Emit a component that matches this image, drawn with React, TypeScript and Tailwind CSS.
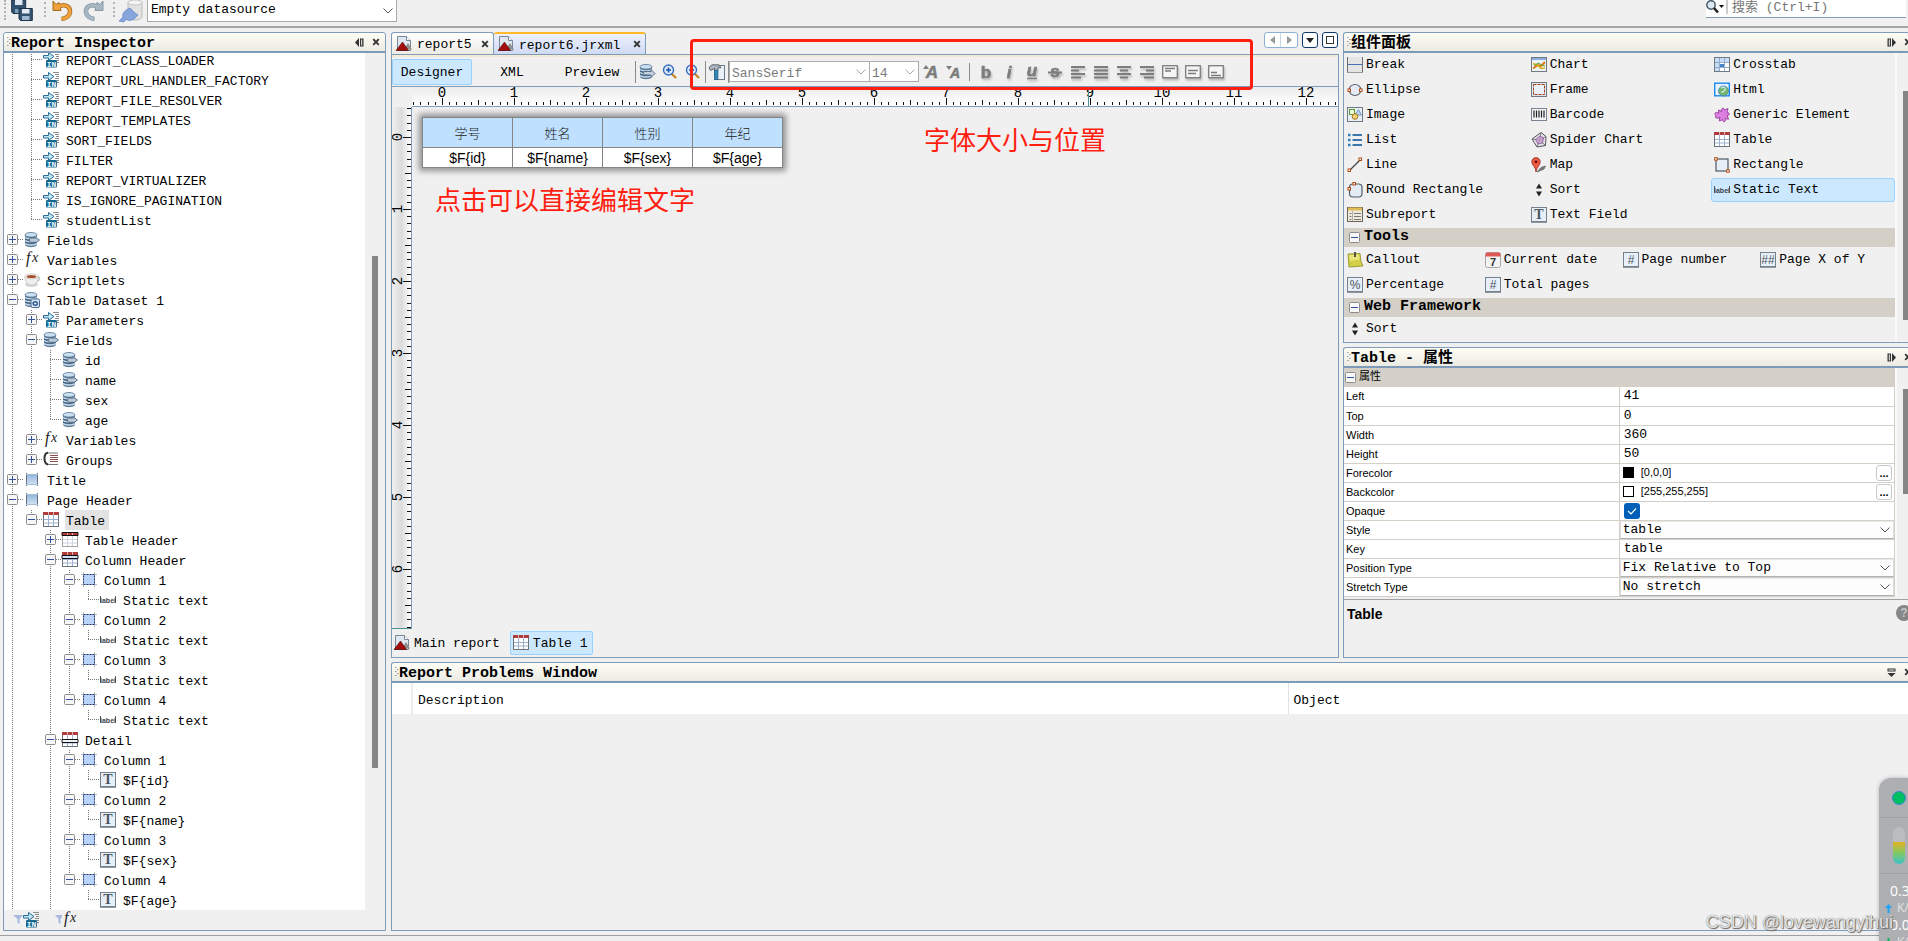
import React from "react";

/* ---------- icons ---------- */

type IconProps = { size?: number; box?: number; children: React.ReactNode };

function Svg({ children, size = 16, box = 16 }: IconProps) {
  return (
    <svg width={size} height={size} viewBox={`0 0 ${box} ${box}`} className="shrink-0 overflow-visible" aria-hidden="true">
      {children}
    </svg>
  );
}

const Param = () => (
  <Svg>
    <path d="M10 .5h6M12 2.5h4M13 4.5h3M12 6.5h4M14 8.5h2M14 10.5h2" stroke="#8b8b8b" />
    <path d="M.5 3.5h5v-3l5.500 4-5.500 4v-2.500h-5z" fill="#bfe6f7" stroke="#2a6c96" />
    <rect x="3" y="8" width="11" height="7.500" rx="1" fill="#17678e" />
    <text x="8.500" y="14.500" fontSize="8" fontWeight="bold" textAnchor="middle" fontFamily="Liberation Mono, monospace" fill="#e6f6fd">
      IN
    </text>
  </Svg>
);

const Disks = () => (
  <>
    <path d="M1 3v9.500c0 3.500 12 3.500 12 0V3z" fill="#5f7d9b" />
    <path d="M1 5.500c2 2 10 2 12 0M1 8.500c2 2 10 2 12 0M1 11.500c2 2 10 2 12 0" fill="none" stroke="#c5d9ea" strokeWidth="1.300" />
    <path d="M1 6.700c2 2 10 2 12 0M1 9.700c2 2 10 2 12 0" fill="none" stroke="#38536f" strokeWidth=".8" />
    <ellipse cx="7" cy="2.800" rx="6" ry="2.300" fill="#c9dff2" stroke="#57748f" strokeWidth=".8" />
  </>
);

const Field = () => (
  <Svg>
    <Disks />
    <path d="M7 6h5.500l3 2-3 2.300H7c-2 0-2-4.300 0-4.300z" fill="#b9c9d8" stroke="#4f6780" strokeWidth=".9" />
  </Svg>
);

const Dataset = () => (
  <Svg>
    <Disks />
    <rect x="7" y="7" width="8.500" height="8.500" rx="1.500" fill="#dbe7f3" stroke="#456b93" />
    <path d="M9 12c0-3 4-3 4.500-.5M13.500 11c0 3-4 3-4.500.5" fill="none" stroke="#2d5c92" strokeWidth="1.400" />
  </Svg>
);

const Fx = () => (
  <Svg>
    <text x="2" y="11" fontSize="16" fontStyle="italic" fontFamily="Liberation Serif, serif" fill="#222">
      f
    </text>
    <text x="8" y="10" fontSize="14" fontStyle="italic" fontFamily="Liberation Serif, serif" fill="#222">
      x
    </text>
  </Svg>
);

const Cup = () => (
  <Svg>
    <ellipse cx="7.500" cy="12.500" rx="6.500" ry="2.500" fill="#d4d4d4" />
    <path d="M12 5h2.500c1.500 0 1.500 4-2 4.500" fill="none" stroke="#c2c2c2" strokeWidth="1.300" />
    <path d="M1 4.500c0 6 3 8.500 6.500 8.500s6.500-2.500 6.500-8.500z" fill="#f1efed" stroke="#c5c0bc" strokeWidth=".8" />
    <ellipse cx="7.500" cy="4.300" rx="6.500" ry="2.500" fill="#faf8f6" stroke="#c5c0bc" strokeWidth=".8" />
    <ellipse cx="7.500" cy="4.500" rx="4.800" ry="1.600" fill="#a4512f" />
  </Svg>
);

const Groups = () => (
  <Svg>
    <path d="M5 .8C2.500 1 1.500 3 1.500 6.500S2.500 12 5 12.500" fill="none" stroke="#333" strokeWidth="2" />
    <path d="M5 1h10M5 12.500h10" stroke="#777" />
    <path d="M7 3.500h8M7 5.500h8M7 7.500h8M7 9.500h8" stroke="#8d5050" />
  </Svg>
);

const Band = () => (
  <Svg>
    <defs>
      <linearGradient id="band" x1="0" y1="0" x2="0" y2="1">
        <stop offset="0" stopColor="#8fb4dc" />
        <stop offset="1" stopColor="#d6e4f4" />
      </linearGradient>
    </defs>
    <path d="M2.500 1v13M13.500 1v13" stroke="#66717c" />
    <rect x="3" y="2" width="10" height="11" fill="url(#band)" />
    <path d="M2 2.500h12M2 12.500h12" stroke="#a5bdd6" />
  </Svg>
);

function Grid({ mark, faded }: { mark?: "top" | "column" | "detail"; faded?: boolean }) {
  return (
    <Svg>
      <rect x=".5" y=".5" width="15" height="14" fill="#fff" stroke={faded ? "#a9a2a2" : "#6d737b"} />
      <path d="M5.500 3v11M10.500 3v11M1 7.500h14M1 11h14" stroke={faded ? "#cdd5e2" : "#9db1cf"} />
      <path d="M0 1.500h16" stroke="#b13c3c" strokeWidth="3" />
      <path d="M5.500 0v3M10.500 0v3" stroke="#ddb0b0" />
      {mark === "top" && <path d="M0 .5h16v3H0z" fill="none" stroke="#111" />}
      {mark === "column" && <path d="M0 3.500h16v3H0z" fill="#cfe2fa" stroke="#111" />}
      {mark === "detail" && <path d="M0 7.500h16v3H0z" fill="#eef3fa" stroke="#111" />}
    </Svg>
  );
}

const Column = () => (
  <Svg>
    <path d="M2.500 0v15M13.500 0v15M0 2.500h16M0 12.500h16" stroke="#b9b9b9" />
    <rect x="2.500" y="2.500" width="11" height="10" fill="#b9d3fb" stroke="#223a78" strokeDasharray="2 1" />
  </Svg>
);

const Label = () => (
  <Svg>
    <path d="M.5 4v7M15.500 4v7" stroke="#555" />
    <text x="8" y="10.500" fontSize="7" fontWeight="bold" textAnchor="middle" fontFamily="Liberation Sans, sans-serif" fill="#3c444d">
      label
    </text>
  </Svg>
);

function Glyph({ text, serif, fontSize = 12 }: { text: string; serif?: boolean; fontSize?: number }) {
  return (
    <Svg>
      <rect x=".5" y=".5" width="15" height="14" fill="#e7eff8" stroke="#76818d" />
      <path d="M0 15.500h16" stroke="#8f979f" />
      <text
        x="8"
        y="12"
        fontSize={serif ? 14 : fontSize}
        textAnchor="middle"
        fontWeight={serif ? "bold" : "normal"}
        fontFamily={serif ? "Liberation Serif, serif" : "Liberation Sans, sans-serif"}
        fill="#4c5560"
      >
        {text}
      </text>
    </Svg>
  );
}

const ReportFile = () => (
  <Svg>
    <path d="M1.500.5h9l4 4v10h-13z" fill="#dfe8f1" stroke="#7a8794" />
    <path d="M10.500.5v4h4" fill="#fff" stroke="#7a8794" />
    <path d="M8 13.500L12 7l4 6.500z" fill="#8f8f8f" />
    <path d="M0 14.500L6.500 6l6 8.500z" fill="#a30d0d" stroke="#4c0000" strokeWidth=".6" />
  </Svg>
);

const paletteIcons: Record<string, React.ReactNode> = {
  Break: (
    <Svg>
      <rect x="1" y="0" width="14" height="15" fill="#e4e4e4" />
      <path d="M.5 0v15.500M15.500 0v15.500" stroke="#707070" />
      <path d="M1 7.500h14" stroke="#4771b5" />
      <path d="M0 15.500h16" stroke="#999" />
    </Svg>
  ),
  Ellipse: (
    <Svg>
      <ellipse cx="8" cy="8" rx="6" ry="5.500" fill="#e3eaf3" stroke="#5c6672" strokeWidth="1.200" />
      <rect x="1" y="7" width="2.500" height="2.500" fill="#fff" stroke="#b54a0e" />
      <rect x="12.500" y="7" width="2.500" height="2.500" fill="#fff" stroke="#b54a0e" />
    </Svg>
  ),
  Image: (
    <Svg>
      <rect x=".5" y=".5" width="15" height="14" fill="#e7eef6" stroke="#6f7883" />
      <rect x="2.500" y="2.500" width="5" height="5" fill="#eef8e2" stroke="#5b9a28" />
      <path d="M8 8l3.500-5.500L14.500 8z" fill="#b9d1ee" stroke="#7d9cc4" />
      <circle cx="8" cy="9.500" r="2.800" fill="#f3cf75" stroke="#a8791b" />
    </Svg>
  ),
  List: (
    <Svg>
      <path d="M1 3h2.500M1 8h2.500M1 13h2.500" stroke="#2f7fc0" strokeWidth="2.400" />
      <path d="M5.500 3H15M5.500 8H15M5.500 13H15" stroke="#3c77ad" strokeWidth="2" />
    </Svg>
  ),
  Line: (
    <Svg>
      <path d="M3 13l10-10" stroke="#444" strokeWidth="1.200" />
      <rect x="1" y="12" width="2.500" height="2.500" fill="#fff" stroke="#b54a0e" />
      <rect x="12" y="1" width="2.500" height="2.500" fill="#fff" stroke="#b54a0e" />
    </Svg>
  ),
  "Round Rectangle": (
    <Svg>
      <rect x="2.500" y="2" width="12.500" height="13" rx="3.500" fill="#e4ebf3" stroke="#4f5a68" strokeWidth="1.200" />
      <rect x="6" y=".5" width="2.500" height="2.500" fill="#fff" stroke="#b54a0e" />
      <rect x="1" y="5.500" width="2.500" height="2.500" fill="#fff" stroke="#b54a0e" />
    </Svg>
  ),
  Subreport: (
    <Svg>
      <rect x=".5" y=".5" width="15" height="14" fill="#eee9dc" stroke="#6b6657" />
      <path d="M1 2h14" stroke="#e3bb55" strokeWidth="3" />
      <path d="M5.500 4v10" stroke="#b5b0a2" />
      <path d="M2.500 6.500h2M7 6.500h7M2.500 9.500h2M7 9.500h7M2.500 12.500h2M7 12.500h7" stroke="#7a7a7a" />
    </Svg>
  ),
  Chart: (
    <Svg>
      <rect x=".5" y=".5" width="15" height="14" fill="#eef3f9" stroke="#6f7883" />
      <path d="M1 2h14" stroke="#8cb0dd" strokeWidth="2" />
      <path d="M2 11.500l5-3.500 3 1 4-4" stroke="#e07a1a" strokeWidth="2" fill="none" />
      <path d="M2 6.500l5 2 3 3 4-.5" stroke="#d4b011" strokeWidth="1.500" fill="none" />
      <path d="M3 9l4-3 4 2 3 1" stroke="#55a03c" fill="none" />
    </Svg>
  ),
  Frame: (
    <Svg>
      <rect x=".5" y=".5" width="15" height="14" fill="#dde6ef" stroke="#6f7883" />
      <rect x="2.500" y="2.500" width="11" height="10" fill="#eaf0f7" stroke="#a8401a" strokeDasharray="3 1" />
    </Svg>
  ),
  Barcode: (
    <Svg>
      <rect x=".5" y="1.500" width="15" height="12" fill="#f2f4f6" stroke="#7b848e" />
      <path d="M3 3.500v7M5.500 3.500v7M8 3.500v7M10.500 3.500v7M13 3.500v7" stroke="#222" strokeWidth="1.200" />
    </Svg>
  ),
  "Spider Chart": (
    <Svg>
      <path d="M1 7l9-6.500 5 4-.5 9L6 15z" fill="#e6e1ea" stroke="#555" />
      <path d="M8.500 8L1 7M8.500 8L10 .5M8.500 8l6.500-3.500M8.500 8l6 5.500M8.500 8L6 15" stroke="#666" strokeWidth=".8" />
      <path d="M4.500 7.500L9 4l3.500 2-1 5-4.500 1z" fill="#c89ad3" fillOpacity=".7" stroke="#7c4a8c" strokeWidth=".7" />
    </Svg>
  ),
  Map: (
    <Svg>
      <path d="M6 15l4-4.500 4.500-1.500L13 12z" fill="#777" stroke="#777" />
      <path d="M5 15C5 10 .8 8.500.8 4.800a4.200 4.200 0 018.400 0C9.200 8.500 5.500 10 5 15z" fill="#ee5a45" stroke="#93271a" strokeWidth=".8" />
      <circle cx="5" cy="4.800" r="1.400" fill="#5b0f08" />
    </Svg>
  ),
  Sort: (
    <Svg>
      <path d="M8 1.500L11 6.500H5zM8 14.500l-3-5h6z" fill="#222" />
    </Svg>
  ),
  "Text Field": <Glyph text="T" serif />,
  Crosstab: (
    <Svg>
      <rect x=".5" y=".5" width="15" height="14" fill="#fff" stroke="#6f7883" />
      <path d="M1 1h14v4H1zM1 5h4v9H1z" fill="#c7dcf5" />
      <rect x="6" y="7" width="5" height="4" fill="#4c83c8" />
      <path d="M5.500 1v13M10.500 1v13M1 5.500h14M1 10.500h14" stroke="#93aacb" />
    </Svg>
  ),
  Html: (
    <Svg>
      <rect x=".7" y="1.200" width="14.600" height="12.600" fill="#e6f2fd" stroke="#1d8af0" strokeWidth="1.400" />
      <circle cx="9.500" cy="9" r="5" fill="#74b56a" stroke="#4685b0" strokeWidth=".8" />
      <path d="M7 6c3-2 5 0 4 2s-3 1-3 3" fill="none" stroke="#cfe9f5" strokeWidth="1.300" />
    </Svg>
  ),
  "Generic Element": (
    <Svg>
      <path
        d="M8 4.500C6 1.500 10-.5 10.500 3L14 1.500l-1 4.300c3-.8 3 3 .2 2.500l1.300 4-3.300-.8c1.800 3.500-2.500 4.500-2.700 1.200L5.300 14l.5-3.600C3 12.500-.5 10 2.300 8.800-.8 7 1.500 4 4.700 6.200L4.500 3z"
        fill="#dd7fe0"
        stroke="#8d2c92"
        strokeWidth=".8"
      />
    </Svg>
  ),
  Table: <Grid />,
  Rectangle: (
    <Svg>
      <rect x="2" y="2" width="12" height="12" fill="#e7eef6" stroke="#4f5a68" strokeWidth="1.200" />
      <rect x=".7" y=".7" width="2.500" height="2.500" fill="#fff" stroke="#b54a0e" />
      <rect x="12.700" y="12.700" width="2.500" height="2.500" fill="#fff" stroke="#b54a0e" />
    </Svg>
  ),
  "Static Text": <Label />,
  Callout: (
    <Svg>
      <path d="M1 2l12-.5 1 8 2 4.500-14 1z" fill="#d3cf49" stroke="#8e8b1f" strokeWidth=".8" />
      <path d="M2 3l10-.5.500 5L3 9z" fill="#e8e57c" />
      <path d="M8 0v5" stroke="#444" strokeWidth="1.800" />
    </Svg>
  ),
  "Current date": (
    <Svg>
      <rect x=".5" y=".5" width="15" height="15" rx="2" fill="#f3f3f3" stroke="#a8a8a8" />
      <path d="M.5 4.500V2.500a2 2 0 012-2h11a2 2 0 012 2v2z" fill="#e05a55" />
      <text x="8" y="14" fontSize="11" fontWeight="bold" textAnchor="middle" fontFamily="Liberation Sans, sans-serif" fill="#333">
        7
      </text>
    </Svg>
  ),
  "Page number": <Glyph text="#" />,
  "Page X of Y": <Glyph text="##" />,
  Percentage: <Glyph text="%" />,
  "Total pages": <Glyph text="#" />,
};

const Chevron = ({ muted }: { muted?: boolean }) => (
  <svg width="10" height="6" viewBox="0 0 10 6" aria-hidden="true" className="pointer-events-none absolute top-1/2 right-1 -translate-y-1/2">
    <path d="M.5.5L5 5 9.500.5" fill="none" stroke={muted ? "#a8a8a8" : "#555"} />
  </svg>
);

const Cross = () => (
  <svg width="8" height="8" viewBox="0 0 8 8" aria-hidden="true" className="shrink-0">
    <path d="M1.200 1.200l5.600 5.600M6.800 1.200L1.200 6.800" stroke="#333" strokeWidth="1.900" />
  </svg>
);

const Grip = () => (
  <svg width="4" height="12" viewBox="0 0 4 12" aria-hidden="true" className="shrink-0">
    <path d="M0 1.500h1.500M2 3.500h1.500M0 5.500h1.500M2 7.500h1.500M0 9.500h1.500" stroke="#999" />
  </svg>
);

const ToolbarGrip = () => <span className="h-5 w-0 border-l-2 border-dotted border-[#b3b3b3]" />;

/* ---------- shared parts ---------- */

function PanelHeader({ title, mode }: { title: string; mode: "left" | "right" | "down" }) {
  return (
    <header className="flex h-5 shrink-0 items-center rounded-t-[3px] border-b-2 border-b-[#7d9ab8] bg-linear-to-b from-[#fefdf6] to-[#ebeae3] pl-[3px]">
      <Grip />
      <h2 className="h-[18px] text-[15px] leading-[22px] font-bold">{title}</h2>
      <div className={mode === "left" ? "ml-auto flex items-center gap-2 pr-[5px]" : "-mr-1 ml-auto flex items-center gap-2"}>
        <button type="button" aria-label="Minimize panel">
          <svg width="9" height="9" viewBox="0 0 9 9" aria-hidden="true">
            {mode === "left" && <path d="M4 0v9L0 4.500zM5 .5h3.500v8H5z" fill="#333" />}
            {mode === "left" && <path d="M6.700 1.500v6" stroke="#f5f4ed" />}
            {mode === "right" && <path d="M5 0v9l4-4.500zM.5.5H4v8H.5z" fill="#333" />}
            {mode === "right" && <path d="M2.300 1.500v6" stroke="#f5f4ed" />}
            {mode === "down" && <path d="M.5.5h8v3h-8zM.5 5h8L4.500 9z" fill="#333" />}
            {mode === "down" && <path d="M1.500 2h6" stroke="#f5f4ed" />}
          </svg>
        </button>
        <button type="button" aria-label="Close panel">
          <Cross />
        </button>
      </div>
    </header>
  );
}

/* ---------- report inspector ---------- */

type TreeNode = {
  label: string;
  icon: React.ReactNode;
  state?: "open" | "closed";
  selected?: boolean;
  continues?: boolean;
  children?: TreeNode[];
};
type TreeRow = { node: TreeNode; guides: boolean[]; last: boolean };

const param = (label: string): TreeNode => ({ label, icon: <Param /> });
const field = (label: string): TreeNode => ({ label, icon: <Field /> });
const column = (label: string, child: string, icon: React.ReactNode): TreeNode => ({
  label,
  icon: <Column />,
  state: "open",
  children: [{ label: child, icon }],
});

const parameters: TreeNode[] = [
  "REPORT_CLASS_LOADER",
  "REPORT_URL_HANDLER_FACTORY",
  "REPORT_FILE_RESOLVER",
  "REPORT_TEMPLATES",
  "SORT_FIELDS",
  "FILTER",
  "REPORT_VIRTUALIZER",
  "IS_IGNORE_PAGINATION",
  "studentList",
].map(param);

const roots: TreeNode[] = [
  { label: "Fields", icon: <Field />, state: "closed" },
  { label: "Variables", icon: <Fx />, state: "closed" },
  { label: "Scriptlets", icon: <Cup />, state: "closed" },
  {
    label: "Table Dataset 1",
    icon: <Dataset />,
    state: "open",
    children: [
      { label: "Parameters", icon: <Param />, state: "closed" },
      { label: "Fields", icon: <Field />, state: "open", children: ["id", "name", "sex", "age"].map(field) },
      { label: "Variables", icon: <Fx />, state: "closed" },
      { label: "Groups", icon: <Groups />, state: "closed" },
    ],
  },
  { label: "Title", icon: <Band />, state: "closed" },
  {
    label: "Page Header",
    icon: <Band />,
    state: "open",
    continues: true,
    children: [
      {
        label: "Table",
        icon: <Grid />,
        state: "open",
        selected: true,
        children: [
          { label: "Table Header", icon: <Grid mark="top" faded />, state: "closed" },
          {
            label: "Column Header",
            icon: <Grid mark="column" />,
            state: "open",
            children: [1, 2, 3, 4].map((n) => column(`Column ${n}`, "Static text", <Label />)),
          },
          {
            label: "Detail",
            icon: <Grid mark="detail" />,
            state: "open",
            continues: true,
            children: ["id", "name", "sex", "age"].map((f, i) => column(`Column ${i + 1}`, `$F{${f}}`, <Glyph text="T" serif />)),
          },
        ],
      },
    ],
  },
];

function flatten(nodes: TreeNode[], guides: boolean[]): TreeRow[] {
  return nodes.flatMap((node, i) => {
    const last = i === nodes.length - 1 && !node.continues;
    return [{ node, guides, last }, ...flatten(node.children ?? [], [...guides, !last])];
  });
}

const treeRows: TreeRow[] = [...flatten(parameters, [true]), ...flatten(roots, [])];

function Guide({ vertical }: { vertical: boolean }) {
  return (
    <svg width="19" height="20" viewBox="0 0 19 20" aria-hidden="true" className="shrink-0">
      {vertical && <path d="M8.500 0v20" stroke="#777" strokeDasharray="1 1" />}
    </svg>
  );
}

function Connector({ state, last }: { state?: "open" | "closed"; last: boolean }) {
  return (
    <svg width="19" height="20" viewBox="0 0 19 20" aria-hidden="true" className="shrink-0">
      <path d={last ? "M8.500 0v10" : "M8.500 0v20"} stroke="#777" strokeDasharray="1 1" />
      <path d="M8 9.500h11" stroke="#777" strokeDasharray="1 1" />
      {state && <rect x="3.500" y="4.500" width="10" height="10" rx="1" fill="#f6f6f6" stroke="#8c8c8c" />}
      {state && <path d={state === "open" ? "M5 9.500h7" : "M5 9.500h7M8.500 6v7"} stroke="#35509c" />}
    </svg>
  );
}

function Inspector() {
  return (
    <aside className="flex w-[383px] shrink-0 flex-col rounded-t-[3px] border border-[#7f9db9] bg-[#f0f0f0]">
      <PanelHeader title="Report Inspector" mode="left" />
      <div className="flex min-h-0 flex-1">
        <ul role="tree" className="flex min-h-0 flex-1 flex-col justify-end overflow-hidden bg-white">
          {treeRows.map(({ node, guides, last }, i) => (
            <li key={i} role="treeitem" aria-selected={!!node.selected} className="flex h-5 shrink-0 items-center">
              {guides.map((g, d) => (
                <Guide key={d} vertical={g} />
              ))}
              <Connector state={node.state} last={last} />
              <span className="flex w-6 shrink-0 pl-px">{node.icon}</span>
              <span className={node.selected ? "-ml-px h-5 bg-[#e3e3e3] pr-1 pl-px leading-6" : "h-5 leading-6"}>{node.label}</span>
            </li>
          ))}
        </ul>
        <div className="flex w-5 flex-col items-center bg-[#f0f0f0] pt-[203px]">
          <div className="h-[512px] w-[6px] bg-[#858585]" />
        </div>
      </div>
      <footer className="flex h-5 shrink-0 items-center gap-4 pl-[9px]">
        <button type="button" aria-label="Filter parameters" className="flex items-center">
          <svg width="10" height="12" viewBox="0 0 10 12" aria-hidden="true">
            <path d="M0 1h10L6.500 5v5l-2-1V5z" fill="#a9b8e0" />
          </svg>
          <Param />
        </button>
        <button type="button" aria-label="Filter variables" className="flex items-center">
          <svg width="7" height="12" viewBox="0 0 7 12" aria-hidden="true">
            <path d="M0 1h7v2L5.500 5v5l-2-1V5z" fill="#a9b8e0" />
          </svg>
          <Fx />
        </button>
      </footer>
    </aside>
  );
}

/* ---------- editor ---------- */

const range = (n: number) => Array.from({ length: n }, (_, i) => i);
const ticks = range(404).map((i) => i - 4);
const tickSize = (k: number) => (k % 10 === 0 ? 8 : k % 5 === 0 ? 6 : 4);

function HorizontalRuler() {
  return (
    <div className="ml-5 h-5 shrink-0 overflow-hidden border-b border-[#7f9db9] bg-linear-to-b from-[#ececec] to-white">
      <svg width="2900" height="19" aria-hidden="true">
        {ticks.map((k) => (
          <path key={k} d={`M${Math.round(30 + k * 7.2) + 0.5} ${19 - tickSize(k)}V18`} stroke="#111" />
        ))}
        {range(13).map((n) => (
          <text key={n} x={30 + n * 72} y="10" fontSize="14" textAnchor="middle" fontFamily="Liberation Mono, monospace">
            {n}
          </text>
        ))}
        <path d="M676.500 0v19" stroke="#4f8f94" />
      </svg>
    </div>
  );
}

function VerticalRuler() {
  return (
    <div className="w-5 shrink-0 overflow-hidden border-r border-b border-r-[#7f9db9] border-b-[#4f8f94] bg-linear-to-r from-[#f0f0f0] via-[#dcdcdc] to-white">
      <svg width="19" height="2900" aria-hidden="true">
        {ticks.map((k) => (
          <path key={k} d={`M${19 - tickSize(k)} ${Math.round(30 + k * 7.2) + 0.5}H19`} stroke="#111" />
        ))}
        {range(7).map((n) => (
          <text
            key={n}
            transform={`translate(10 ${30 + n * 72}) rotate(-90)`}
            fontSize="14"
            textAnchor="middle"
            fontFamily="Liberation Mono, monospace"
          >
            {n}
          </text>
        ))}
      </svg>
    </div>
  );
}

function Magnifier({ minus }: { minus?: boolean }) {
  return (
    <Svg>
      <path d="M9.500 9.500l4.500 4.500" stroke="#c9892b" strokeWidth="2.400" />
      <circle cx="6.500" cy="6" r="5" fill="#dcebfa" stroke="#3a6fc0" strokeWidth="1.400" />
      <path d={minus ? "M4 6h5" : "M4 6h5M6.500 3.500v5"} stroke="#1f55ad" strokeWidth="1.600" />
    </Svg>
  );
}

const Sep = () => <span className="h-[22px] w-px shrink-0 bg-[#8a8a8a]" />;

const letterStyle = { fontWeight: "bold", textAnchor: "middle", fontFamily: "Liberation Sans, sans-serif", stroke: "#7d7d7d", strokeWidth: 0.6 } as const;

const formatButtons: { name: string; icon: React.ReactNode }[] = [
  {
    name: "Bold",
    icon: (
      <text x="8" y="14" fontSize="17" {...letterStyle}>
        b
      </text>
    ),
  },
  {
    name: "Italic",
    icon: (
      <text x="8" y="14" fontSize="17" fontStyle="italic" {...letterStyle}>
        i
      </text>
    ),
  },
  {
    name: "Underline",
    icon: (
      <>
        <text x="8" y="12" fontSize="17" fontStyle="italic" {...letterStyle}>
          u
        </text>
        <path d="M3 14.500h10" stroke="#7d7d7d" strokeWidth="1.500" />
      </>
    ),
  },
  {
    name: "Strikethrough",
    icon: (
      <>
        <text x="8" y="13" fontSize="17" {...letterStyle}>
          s
        </text>
        <path d="M1 8.500h14" stroke="#7d7d7d" strokeWidth="2" />
      </>
    ),
  },
  { name: "Align left", icon: <path d="M1 3h14M1 6.500h8M1 10h14M1 13.500h10" stroke="#7d7d7d" strokeWidth="1.800" /> },
  { name: "Justify", icon: <path d="M1 3h14M1 6.500h14M1 10h14M1 13.500h14" stroke="#7d7d7d" strokeWidth="1.800" /> },
  { name: "Center", icon: <path d="M1 3h14M4 6.500h8M1 10h14M4 13.500h8" stroke="#7d7d7d" strokeWidth="1.800" /> },
  { name: "Align right", icon: <path d="M1 3h14M7 6.500h8M1 10h14M5 13.500h10" stroke="#7d7d7d" strokeWidth="1.800" /> },
  {
    name: "Align top",
    icon: (
      <>
        <rect x=".7" y="1.700" width="14.600" height="12" fill="#f5f5f5" stroke="#7d7d7d" strokeWidth="1.300" />
        <path d="M3 4.500h10M3 7h6" stroke="#7d7d7d" strokeWidth="1.600" />
      </>
    ),
  },
  {
    name: "Align middle",
    icon: (
      <>
        <rect x=".7" y="1.700" width="14.600" height="12" fill="#f5f5f5" stroke="#7d7d7d" strokeWidth="1.300" />
        <path d="M3 6.500h10M3 9.500h8" stroke="#7d7d7d" strokeWidth="1.600" />
      </>
    ),
  },
  {
    name: "Align bottom",
    icon: (
      <>
        <rect x=".7" y="1.700" width="14.600" height="12" fill="#f5f5f5" stroke="#7d7d7d" strokeWidth="1.300" />
        <path d="M3 8.500h6M3 11.500h10" stroke="#7d7d7d" strokeWidth="1.600" />
      </>
    ),
  },
];

function EditorToolbar() {
  return (
    <div className="flex h-8 shrink-0 items-center border-t-2 border-b border-t-[#f3ead6] border-b-[#7f9db9]">
      <button type="button" className="h-[26px] w-20 shrink-0 rounded-[2px] border border-[#99d1ff] bg-[#cce8ff] pt-[2px]">
        Designer
      </button>
      <button type="button" className="h-[26px] w-20 shrink-0 pt-[2px]">
        XML
      </button>
      <button type="button" className="mr-[3px] h-[26px] w-20 shrink-0 pt-[2px]">
        Preview
      </button>
      <Sep />
      <button type="button" aria-label="Report query" className="mx-[3px]">
        <Svg>
          <Disks />
          <path d="M6 7.500h6V5.500l4 4-4 4v-2.500H6c-2 0-2-3.500 0-3.500z" fill="#c3d1de" stroke="#4f6780" strokeWidth=".9" />
        </Svg>
      </button>
      <button type="button" aria-label="Zoom in" className="mx-1">
        <Magnifier />
      </button>
      <button type="button" aria-label="Zoom out" className="mr-1 ml-[3px]">
        <Magnifier minus />
      </button>
      <Sep />
      <button type="button" aria-label="Formatting tools" className="mx-[3px]">
        <Svg>
          <rect x="5.500" y="1.500" width="10" height="14" fill="#e9f0f7" stroke="#6c7a88" />
          <path d="M0 3.500L3 .8h7l2 3H9v2.500H5.500V4.500L1.500 6.500z" fill="#aeb7bf" stroke="#454e57" strokeWidth=".8" />
          <rect x="5.500" y="6.500" width="3.500" height="9" fill="#2f87b5" stroke="#1f5f83" strokeWidth=".6" />
        </Svg>
      </button>
      <Sep />
      <div className="relative">
        <select aria-label="Font" className="block h-[21px] w-[141px] appearance-none border border-[#adadad] bg-white px-[2px] pt-[2px] text-[#7a7a7a]">
          <option>SansSerif</option>
        </select>
        <Chevron muted />
      </div>
      <div className="relative -ml-px">
        <select aria-label="Font size" className="block h-[21px] w-[50px] appearance-none border border-[#adadad] bg-white px-[2px] pt-[2px] text-[#7a7a7a]">
          <option>14</option>
        </select>
        <Chevron muted />
      </div>
      <div className="flex items-center gap-[7px] px-1">
        <button type="button" aria-label="Increase font size">
          <Svg>
            <path d="M0 5l3-4 3 4z" fill="#7d7d7d" />
            <text x="9" y="14" fontSize="17" fontStyle="italic" fill="#7d7d7d" {...letterStyle}>
              A
            </text>
          </Svg>
        </button>
        <button type="button" aria-label="Decrease font size">
          <Svg>
            <path d="M0 2h6L3 6z" fill="#7d7d7d" />
            <text x="9" y="14" fontSize="14" fontStyle="italic" fill="#7d7d7d" {...letterStyle}>
              A
            </text>
          </Svg>
        </button>
      </div>
      <span className="ml-[3px] h-[18px] w-px bg-[#8a8a8a]" />
      <div className="flex items-center gap-[7px] pl-2 drop-shadow-[1px_2px_1px_rgba(0,0,0,0.25)]">
        {formatButtons.map((b) => (
          <button key={b.name} type="button" aria-label={b.name}>
            <svg width="16" height="16" viewBox="0 0 16 16" fill="#7d7d7d" aria-hidden="true" className="overflow-visible">
              {b.icon}
            </svg>
          </button>
        ))}
      </div>
    </div>
  );
}

const reportColumns = [
  ["学号", "$F{id}"],
  ["姓名", "$F{name}"],
  ["性别", "$F{sex}"],
  ["年纪", "$F{age}"],
];

function Editor() {
  return (
    <section className="relative flex min-w-0 flex-1 flex-col">
      <div className="flex h-[23px] shrink-0 border-b border-[#7f9db9] pr-px">
        <div className="flex w-[103px] items-center gap-[5px] rounded-t-[3px] border border-b-0 border-[#7f9db9] bg-linear-to-b from-white to-[#ecebe4] pl-1">
          <ReportFile />
          <span className="pt-[3px]">report5</span>
          <button type="button" aria-label="Close report5" className="ml-auto pr-1">
            <Cross />
          </button>
        </div>
        <div className="flex w-[152px] items-center gap-[5px] rounded-t-[3px] border-t-2 border-r border-t-[#ffb92b] border-r-[#7f9db9] bg-linear-to-b from-[#eef1fd] to-[#cfdaf4] pl-1">
          <ReportFile />
          <span className="pt-[3px]">report6.jrxml</span>
          <button type="button" aria-label="Close report6.jrxml" className="ml-auto pr-1">
            <Cross />
          </button>
        </div>
        <div className="ml-auto flex h-4 gap-1">
          <div className="flex rounded-[3px] border border-[#8fb0d0] bg-white">
            <button type="button" aria-label="Scroll tabs left" className="flex w-4 items-center justify-center border-r border-[#c8d6e4]">
              <svg width="5" height="8" viewBox="0 0 5 8" aria-hidden="true">
                <path d="M5 0v8L0 4z" fill="#999" />
              </svg>
            </button>
            <button type="button" aria-label="Scroll tabs right" className="flex w-4 items-center justify-center">
              <svg width="5" height="8" viewBox="0 0 5 8" aria-hidden="true">
                <path d="M0 0v8l5-4z" fill="#999" />
              </svg>
            </button>
          </div>
          <button type="button" aria-label="Show opened documents" className="flex w-4 items-center justify-center rounded-[3px] border border-[#0d3a6b] bg-white">
            <svg width="8" height="5" viewBox="0 0 8 5" aria-hidden="true">
              <path d="M0 0h8L4 5z" fill="#222" />
            </svg>
          </button>
          <button type="button" aria-label="Maximize window" className="flex w-4 items-center justify-center rounded-[3px] border border-[#0d3a6b] bg-white">
            <span className="size-2 border border-[#333]" />
          </button>
        </div>
      </div>

      <div className="flex min-h-0 flex-1 flex-col border border-t-0 border-[#7f9db9]">
        <EditorToolbar />
        <HorizontalRuler />
        <div className="flex min-h-0 flex-1">
          <VerticalRuler />
          <div className="relative min-w-0 flex-1">
            <table className="absolute top-[10px] left-[10px] w-[361px] table-fixed border-collapse text-center font-['Liberation_Sans','Noto_Sans_CJK_SC',sans-serif] shadow-[0_0_6px_3px_rgba(0,0,0,0.4)]">
              <thead>
                <tr className="h-[30px] bg-[#bfe0ff] text-[13px] text-[#222]">
                  {reportColumns.map(([title]) => (
                    <th key={title} className="border border-[#848484] p-0 pt-[2px] font-light">
                      {title}
                    </th>
                  ))}
                </tr>
              </thead>
              <tbody>
                <tr className="h-5 bg-white text-[14px] leading-[18px]">
                  {reportColumns.map(([title, expr]) => (
                    <td key={title} className="border border-[#848484] p-0 pt-px">
                      {expr}
                    </td>
                  ))}
                </tr>
              </tbody>
            </table>
            <p className="absolute top-20 left-[23px] text-[26px] leading-8 whitespace-nowrap text-[#ff1e10]">点击可以直接编辑文字</p>
            <p className="absolute top-5 left-[512px] text-[26px] leading-8 whitespace-nowrap text-[#ff1e10]">字体大小与位置</p>
          </div>
        </div>
        <div className="flex h-7 shrink-0 items-center gap-[10px] pl-[2px]">
          <button type="button" className="flex items-center gap-1">
            <ReportFile />
            <span className="pt-px">Main report</span>
          </button>
          <button type="button" className="flex h-6 w-[83px] items-center gap-1 rounded-[2px] border border-[#99d1ff] bg-[#cce8ff] pl-[2px]">
            <Grid />
            <span className="pt-px">Table 1</span>
          </button>
        </div>
      </div>
      <div className="pointer-events-none absolute top-[7px] left-[299px] h-[51px] w-[563px] rounded-[4px] border-[3px] border-[#ff1e10]" />
    </section>
  );
}

/* ---------- palette ---------- */

const components = [
  "Break", "Chart", "Crosstab",
  "Ellipse", "Frame", "Html",
  "Image", "Barcode", "Generic Element",
  "List", "Spider Chart", "Table",
  "Line", "Map", "Rectangle",
  "Round Rectangle", "Sort", "Static Text",
  "Subreport", "Text Field",
];
const tools = ["Callout", "Current date", "Page number", "Page X of Y", "Percentage", "Total pages"];

function PaletteItem({ name }: { name: string }) {
  const selected = name === "Static Text";
  return (
    <button
      type="button"
      aria-pressed={selected}
      className={
        selected
          ? "mb-px flex h-6 items-center gap-[3px] rounded-[3px] border border-[#99d1ff] bg-[#cce8ff] pl-[2px]"
          : "mb-px flex h-6 items-center gap-[3px] pl-[3px]"
      }
    >
      {paletteIcons[name]}
      <span>{name}</span>
    </button>
  );
}

function Collapse() {
  return (
    <svg width="11" height="11" viewBox="0 0 11 11" aria-hidden="true" className="shrink-0">
      <rect x=".5" y=".5" width="10" height="10" rx="1" fill="#f8f8f8" stroke="#8c8c8c" />
      <path d="M2 5.500h7" stroke="#35509c" />
    </svg>
  );
}

function PaletteSection({ title }: { title: string }) {
  return (
    <h3 className="flex h-[19px] items-center gap-1 bg-[#d4d0c8] pl-[5px] text-[15px] font-bold">
      <Collapse />
      {title}
    </h3>
  );
}

function Palette() {
  return (
    <section className="flex h-[311px] shrink-0 flex-col rounded-tl-[3px] border border-r-0 border-[#7f9db9]">
      <PanelHeader title="组件面板" mode="right" />
      <div className="flex min-h-0 flex-1">
        <div className="flex-1">
          <div className="grid grid-cols-3">
            {components.map((name) => (
              <PaletteItem key={name} name={name} />
            ))}
          </div>
          <PaletteSection title="Tools" />
          <div className="grid grid-cols-4 pt-px">
            {tools.map((name) => (
              <PaletteItem key={name} name={name} />
            ))}
          </div>
          <PaletteSection title="Web Framework" />
          <PaletteItem name="Sort" />
        </div>
        <div className="flex w-[13px] justify-end border-l-2 border-[#fafafa] pt-[38px]">
          <div className="h-[229px] w-[5px] bg-[#858585]" />
        </div>
      </div>
    </section>
  );
}

/* ---------- properties ---------- */

type Property = { name: string; kind: "text" | "color" | "check" | "select"; value: string };

const properties: Property[] = [
  { name: "Left", kind: "text", value: "41" },
  { name: "Top", kind: "text", value: "0" },
  { name: "Width", kind: "text", value: "360" },
  { name: "Height", kind: "text", value: "50" },
  { name: "Forecolor", kind: "color", value: "[0,0,0]" },
  { name: "Backcolor", kind: "color", value: "[255,255,255]" },
  { name: "Opaque", kind: "check", value: "on" },
  { name: "Style", kind: "select", value: "table" },
  { name: "Key", kind: "text", value: "table" },
  { name: "Position Type", kind: "select", value: "Fix Relative to Top" },
  { name: "Stretch Type", kind: "select", value: "No stretch" },
];

const propertyId = (name: string) => `prop-${name.replace(" ", "-").toLowerCase()}`;

function PropertyEditor({ property }: { property: Property }) {
  const id = propertyId(property.name);
  switch (property.kind) {
    case "text":
      return <input id={id} defaultValue={property.value} className="block h-[18px] w-full bg-white px-1 leading-[18px] outline-none" />;
    case "color":
      return (
        <div className="flex h-[18px] items-center pr-[2px] pl-[3px] font-['Liberation_Sans',sans-serif] text-[11px]">
          <span className={property.name === "Forecolor" ? "size-[11px] border border-black bg-black" : "size-[11px] border border-black bg-white"} />
          <span className="ml-[7px]">{property.value}</span>
          <button
            id={id}
            type="button"
            aria-label={`Edit ${property.name}`}
            className="ml-auto flex h-4 w-4 items-end justify-center rounded-[3px] border border-[#c9c9c9] bg-[#fdfdfd] leading-[14px] font-bold"
          >
            ...
          </button>
        </div>
      );
    case "check":
      return (
        <div className="relative flex h-[18px] items-center pl-1">
          <input id={id} type="checkbox" defaultChecked className="size-4 appearance-none rounded-[3px] bg-[#005fb8]" />
          <svg width="16" height="16" viewBox="0 0 16 16" aria-hidden="true" className="pointer-events-none absolute left-1">
            <path d="M4 8l3 3 5-5.500" fill="none" stroke="#fff" strokeWidth="1.200" />
          </svg>
        </div>
      );
    case "select":
      return (
        <div className="relative">
          <select
            id={id}
            className="block h-[18px] w-full appearance-none border border-t-[#e8e8e8] border-r-[#dcdcdc] border-b-[#b0b0b0] border-l-[#dcdcdc] bg-[#fdfdfd] px-[2px] leading-4"
          >
            <option>{property.value}</option>
          </select>
          <Chevron />
        </div>
      );
  }
}

function Properties() {
  return (
    <section className="flex min-h-0 flex-1 flex-col rounded-tl-[3px] border border-r-0 border-[#7f9db9]">
      <PanelHeader title="Table - 属性" mode="right" />
      <div className="flex shrink-0 border-b border-[#a0a0a0] pb-[2px]">
        <div className="flex-1">
          <h3 className="flex h-[19px] items-center gap-[3px] bg-[#d4d0c8] pl-px text-[11px]">
            <Collapse />
            属性
          </h3>
          <table className="w-full table-fixed border-collapse bg-white">
            <tbody>
              {properties.map((p) => (
                <tr key={p.name} className="h-[19px] border-b border-[#d4d0c8]">
                  <th
                    scope="row"
                    className="w-1/2 border-r border-[#d4d0c8] p-0 pl-[2px] text-left font-['Liberation_Sans',sans-serif] text-[11px] leading-[18px] font-normal"
                  >
                    <label htmlFor={propertyId(p.name)}>{p.name}</label>
                  </th>
                  <td className="border-r border-[#d4d0c8] p-0">
                    <PropertyEditor property={p} />
                  </td>
                </tr>
              ))}
            </tbody>
          </table>
        </div>
        <div className="flex w-[13px] justify-end border-l-2 border-[#fafafa] pt-[21px]">
          <div className="h-[105px] w-[5px] bg-[#858585]" />
        </div>
      </div>
      <div className="flex items-start justify-between overflow-hidden pt-[5px] pl-[3px] font-['Liberation_Sans',sans-serif]">
        <strong className="text-[14px] leading-[18px]">Table</strong>
        <button
          type="button"
          aria-label="Help"
          className="-mr-1 flex size-4 items-center justify-center rounded-full bg-[#868686] text-[12px] font-bold text-[#c4c4c4]"
        >
          ?
        </button>
      </div>
    </section>
  );
}

/* ---------- problems ---------- */

function Problems() {
  return (
    <section className="flex min-h-0 flex-1 flex-col rounded-tl-[3px] border border-r-0 border-[#7f9db9]">
      <PanelHeader title="Report Problems Window" mode="down" />
      <table className="w-full table-fixed border-collapse">
        <thead>
          <tr className="h-[31px] bg-white text-left">
            <th className="w-5 border-r-2 border-[#ececec]" aria-label="Severity" />
            <th className="border-r border-[#e2e2e2] px-[5px] pt-1 font-normal">Description</th>
            <th className="w-[620px] px-[5px] pt-1 font-normal">Object</th>
          </tr>
        </thead>
      </table>
    </section>
  );
}

/* ---------- application ---------- */

const undoTail = "M6 7.500C10 3.500 18.500 5 18 12c-.4 4-4 6.500-8.500 7";
const redoTail = "M16 7.500C12 3.500 3.500 5 4 12c.4 4 4 6.500 8.500 7";

function TopBar() {
  return (
    <div className="flex h-7 shrink-0 items-start border-b-2 border-[#a7a7a7] pl-1">
      <ToolbarGrip />
      <button type="button" aria-label="Save all" className="ml-[5px]">
        <Svg size={22} box={22}>
          <path d="M.7 0h14v13.500H2L.7 12z" fill="#34526f" stroke="#1d3246" />
          <path d="M4 0h7.500v5H4z" fill="#e1e9f1" />
          <path d="M4 9h6v4H4z" fill="#7ea0bf" />
          <path d="M8 8.500h13.300V20.500H9.500L8 19z" fill="#34526f" stroke="#1d3246" />
          <path d="M11 9h7.500v4.500H11z" fill="#e1e9f1" />
          <path d="M11 16h7.500v4H11z" fill="#9db8d0" />
        </Svg>
      </button>
      <span className="ml-[11px]">
        <ToolbarGrip />
      </span>
      <button type="button" aria-label="Undo" className="ml-[6px]">
        <Svg size={22} box={22}>
          <path d={undoTail} fill="none" stroke="#a8681a" strokeWidth="4.600" />
          <path d="M1 1l3 3.500 3-2 2 8H1z" fill="#eda23b" stroke="#a8681a" />
          <path d={undoTail} fill="none" stroke="#eda23b" strokeWidth="3" />
        </Svg>
      </button>
      <button type="button" aria-label="Redo" className="ml-2">
        <Svg size={22} box={22}>
          <path d={redoTail} fill="none" stroke="#8698a5" strokeWidth="4.600" />
          <path d="M21 1l-3 3.500-3-2-2 8h8z" fill="#a6b7c3" stroke="#8698a5" />
          <path d={redoTail} fill="none" stroke="#a6b7c3" strokeWidth="3" />
        </Svg>
      </button>
      <span className="ml-[9px]">
        <ToolbarGrip />
      </span>
      <button type="button" aria-label="Report datasources" className="ml-1">
        <Svg size={24} box={24}>
          <path d="M9 2v15c2 4 12 4 14 0V2z" fill="#e2e2e2" stroke="#bdbdbd" />
          <ellipse cx="16" cy="2.500" rx="7" ry="2.500" fill="#f4f4f4" stroke="#c4c4c4" />
          <path d="M0 21l4-4c-1-3 1-6 5-8l2-1 5 5 3 2-4 4c-3 2-6 1.500-7.500.5L4.500 22z" fill="#86a5dc" stroke="#6688c4" strokeWidth=".8" />
        </Svg>
      </button>
      <div className="relative ml-1">
        <select aria-label="Datasource" className="block h-[22px] w-[250px] appearance-none border border-t-0 border-[#ababab] bg-white px-[3px] pb-[2px]">
          <option>Empty datasource</option>
        </select>
        <Chevron />
      </div>
      <label className="mr-[2px] ml-auto flex h-[18px] w-[200px] items-start border-b border-[#7f9db9] bg-white text-[#777]">
        <svg width="22" height="15" viewBox="0 0 22 15" aria-hidden="true" className="shrink-0">
          <circle cx="5" cy="5" r="4.200" fill="#dbeaf7" stroke="#4b5a68" strokeWidth="1.500" />
          <path d="M8 8l4 4.500" stroke="#222" strokeWidth="2.600" />
          <path d="M13 5h5l-2.500 3z" fill="#111" />
          <path d="M21 0v14" stroke="#999" />
        </svg>
        <input
          type="search"
          aria-label="Search"
          placeholder="搜索 (Ctrl+I)"
          className="h-[15px] min-w-0 flex-1 bg-transparent pl-1 leading-[15px] outline-none placeholder:text-[#777]"
        />
      </label>
    </div>
  );
}

function NetworkWidget() {
  return (
    <div className="absolute right-0 bottom-0 h-[163px] w-[29px] overflow-hidden rounded-tl-[12px] bg-[#aeafb3] font-['Open_Sans',sans-serif] text-[14px] whitespace-nowrap text-white shadow-[0_0_4px_rgba(0,0,0,0.25)]">
      <div className="flex h-10 items-center border-b border-[#9da3a5] pl-[13px]">
        <span className="size-[14px] shrink-0 rounded-full border border-[#3a86cf] bg-[#00bf63]" />
      </div>
      <div className="flex h-[56px] items-center border-b border-[#9da3a5] pl-[14px]">
        <span className="flex h-[37px] w-3 flex-col justify-end overflow-hidden rounded-full bg-[#bbbcc0]">
          <span className="h-[22px] bg-linear-to-b from-[#e0b01c] via-[#7cc860] to-[#35c0c6]" />
        </span>
      </div>
      <p className="mt-2 pl-[11px] leading-[18px]">0.3</p>
      <p className="flex items-center gap-[5px] pl-[6px] text-[12px] leading-4 text-[#e4e4e6]">
        <svg width="7" height="9" viewBox="0 0 7 9" aria-hidden="true" className="shrink-0">
          <path d="M3.500 0L7 4H4.500v5h-2V4H0z" fill="#1ba4f5" />
        </svg>
        K/
      </p>
      <p className="pl-[11px] leading-[18px]">0.0</p>
      <p className="flex items-center gap-[5px] pl-[6px] text-[12px] leading-4 text-[#e4e4e6]">
        <svg width="7" height="9" viewBox="0 0 7 9" aria-hidden="true" className="shrink-0">
          <path d="M3.500 9L7 5H4.500V0h-2v5H0z" fill="#0dbb5c" />
        </svg>
        K/
      </p>
    </div>
  );
}

export default function App() {
  return (
    <div className="relative flex h-screen flex-col overflow-hidden bg-[#f0f0f0] font-['Liberation_Mono','Noto_Sans_CJK_SC',monospace] text-[13px] text-black">
      <TopBar />
      <main className="flex min-h-0 flex-1 gap-[5px] pt-1 pb-1 pl-[3px]">
        <Inspector />
        <div className="flex min-w-0 flex-1 flex-col gap-1">
          <div className="flex h-[626px] shrink-0 gap-1">
            <Editor />
            <div className="flex w-[565px] shrink-0 flex-col gap-1">
              <Palette />
              <Properties />
            </div>
          </div>
          <Problems />
        </div>
      </main>
      <footer className="h-[6px] shrink-0 border-t border-[#a0a0a0]" />
      <NetworkWidget />
      <p className="pointer-events-none absolute right-[15px] bottom-[7px] font-['Liberation_Sans',sans-serif] text-[18px] leading-6 text-[#e4e4e4] [text-shadow:1px_1px_1px_#666,0_0_1px_#666]">
        CSDN @lovewangyihui
      </p>
    </div>
  );
}
